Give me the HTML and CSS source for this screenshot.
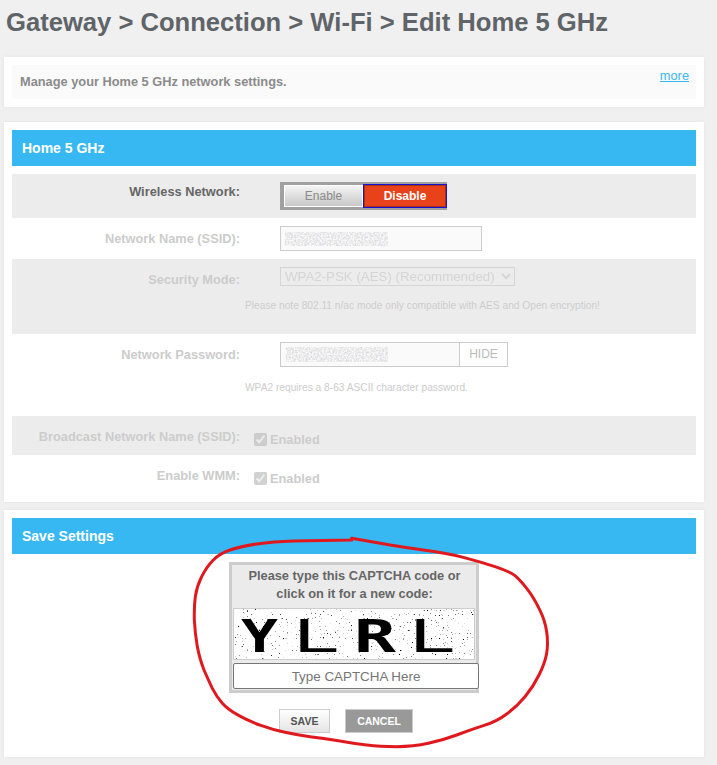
FILE: index.html
```html
<!DOCTYPE html>
<html lang="en">
<head>
  <meta charset="UTF-8" />
  <title>Edit Home 5 GHz</title>
  <link rel="stylesheet" href="styles.css">
</head>
<body>

  <svg class="defs" width="0" height="0">
    <filter id="specks" x="0" y="0" width="100%" height="100%">
      <feTurbulence type="fractalNoise" baseFrequency="0.75" numOctaves="1" seed="7" />
      <feColorMatrix type="matrix" values="0 0 0 0 0  0 0 0 0 0  0 0 0 0 0  9 0 0 0 -6" />
    </filter>
    <filter id="blurred" x="0" y="0" width="100%" height="100%">
      <feTurbulence type="fractalNoise" baseFrequency="0.6" numOctaves="2" seed="3" />
      <feColorMatrix type="matrix" values="0 0 0 0 .72  0 0 0 0 .72  0 0 0 0 .74  2.4 0 0 0 -0.75" />
    </filter>
  </svg>

  <h1>Gateway &gt; Connection &gt; Wi-Fi &gt; Edit Home 5 GHz</h1>

  <div class="panel intro-panel">
    <div class="intro">
      <p>Manage your Home 5 GHz network settings.</p>
      <a href="#">more</a>
    </div>
  </div>

  <div class="panel">
    <h2>Home 5 GHz</h2>

    <div class="row gray toggle-row">
      <div class="row-label active">Wireless Network:</div>
      <div class="row-value">
        <div class="toggle">
          <button class="toggle-on">Enable</button>
          <button class="toggle-off">Disable</button>
        </div>
      </div>
    </div>

    <div class="row ssid-row">
      <div class="row-label">Network Name (SSID):</div>
      <div class="row-value">
        <div class="field ssid-field">
          <svg class="smudge" width="103" height="14"><rect width="103" height="14" filter="url(#blurred)" /></svg>
        </div>
      </div>
    </div>

    <div class="row gray security-row">
      <div class="row-label">Security Mode:</div>
      <div class="row-value">
        <select class="mode" disabled>
          <option>WPA2-PSK (AES) (Recommended)</option>
        </select>
        <p class="note note-mode">Please note 802.11 n/ac mode only compatible with AES and Open encryption!</p>
      </div>
    </div>

    <div class="row password-row">
      <div class="row-label">Network Password:</div>
      <div class="row-value">
        <div class="field password-field">
          <div class="password-text">
            <svg class="smudge" width="102" height="15"><rect width="102" height="15" filter="url(#blurred)" /></svg>
          </div>
          <span class="hide">HIDE</span>
        </div>
        <p class="note note-password">WPA2 requires a 8-63 ASCII character password.</p>
      </div>
    </div>

    <div class="row gray check-row">
      <div class="row-label">Broadcast Network Name (SSID):</div>
      <label class="check"><input type="checkbox" checked disabled />Enabled</label>
    </div>

    <div class="row check-row">
      <div class="row-label">Enable WMM:</div>
      <label class="check"><input type="checkbox" checked disabled />Enabled</label>
    </div>
  </div>

  <div class="panel save-panel">
    <h2>Save Settings</h2>

    <div class="captcha">
      <p>Please type this CAPTCHA code or<br />click on it for a new code:</p>
      <svg class="captcha-img" width="242" height="52">
        <rect width="240" height="50" filter="url(#specks)" />
        <text class="captcha-code heavy" x="7" y="43" textLength="37" lengthAdjust="spacingAndGlyphs">Y</text>
        <text class="captcha-code" x="58" y="43" textLength="48" lengthAdjust="spacingAndGlyphs">L</text>
        <text class="captcha-code heavy" x="120" y="43" textLength="42" lengthAdjust="spacingAndGlyphs">R</text>
        <text class="captcha-code" x="174" y="43" textLength="48" lengthAdjust="spacingAndGlyphs">L</text>
      </svg>
      <input type="text" placeholder="Type CAPTCHA Here" />
    </div>

    <div class="actions">
      <button class="save">SAVE</button>
      <button class="cancel">CANCEL</button>
    </div>
  </div>

  <!-- red marker drawn over the screenshot -->
  <svg class="marker" width="380" height="235" viewBox="0 0 1140 705">
    <path d="M515 30Q400 32 340 33Q280 35 230 42Q180 50 150 60Q120 70 100 90Q80 110 65 140Q50 170 46 200Q42 230 43 270Q45 310 52 350Q60 390 72 420Q85 450 97 475Q110 500 127 520Q145 540 177 557Q210 575 245 587Q280 600 315 607Q350 615 390 620Q430 625 475 632Q520 640 560 645Q600 650 650 650Q700 650 745 640Q790 630 830 615Q870 600 910 587Q950 575 980 552Q1010 530 1035 500Q1060 470 1077 435Q1095 400 1100 370Q1105 340 1100 305Q1095 270 1077 235Q1060 200 1040 175Q1020 150 1005 137Q990 125 945 110Q900 95 850 82Q800 70 735 61Q670 52 635 46Q600 40 515 25L515 30" />
  </svg>

</body>
</html>
```

FILE: styles.css
```css
body {
  margin: 0;
  height: 765px;
  overflow: hidden;
  position: relative;
  font-family: "Liberation Sans", Arial, sans-serif;
  background-color: #f0f0f0;
  color: #666;
}

.defs {
  position: absolute;
}

h1 {
  margin: 0;
  padding: 7px 0 0 6px;
  height: 57px;
  box-sizing: border-box;
  font-size: 25.6px;
  line-height: 30px;
  font-weight: bold;
  color: #5f6468;
}

.panel {
  width: 684px;
  margin-left: 4px;
  padding: 8px;
  background-color: #fff;
  box-shadow: 0 0 4px rgba(0, 0, 0, 0.06);
}

.intro-panel {
  margin-bottom: 15px;
}

.save-panel {
  margin-top: 8px;
}

.intro {
  display: flex;
  justify-content: space-between;
  height: 34px;
  padding: 0 7px 0 8px;
  background-color: #fafafa;
}

.intro p {
  margin: 0;
  padding-top: 9px;
  font-size: 12.8px;
  line-height: 16px;
  font-weight: bold;
  color: #8a8a8a;
}

.intro a {
  padding-top: 4px;
  font-size: 12.8px;
  line-height: 14px;
  color: #38b8f2;
}

h2 {
  margin: 0;
  height: 36px;
  padding-left: 10px;
  background-color: #38b8f2;
  color: #fff;
  font-size: 14px;
  line-height: 36px;
  font-weight: bold;
}

.row {
  display: flex;
  box-sizing: border-box;
}

.gray {
  background-color: #ececec;
}

.row-label {
  width: 228px;
  flex-shrink: 0;
  padding-top: 13px;
  text-align: right;
  font-size: 12.8px;
  line-height: 15px;
  font-weight: bold;
  color: #ccc;
}

.row-label.active {
  color: #666;
}

.row-value {
  padding-left: 40px;
}

.toggle-row {
  height: 44px;
  margin-top: 8px;
}

.ssid-row {
  height: 41px;
  padding-top: 8px;
}

.ssid-row .row-label,
.password-row .row-label {
  padding-top: 5px;
}

.security-row {
  height: 75px;
  padding-top: 8px;
}

.security-row .row-label {
  padding-top: 5px;
}

.password-row {
  height: 82px;
  padding-top: 8px;
}

.check-row {
  height: 39px;
}

.toggle-row .row-label {
  padding-top: 10px;
}

.toggle-row .row-value {
  padding-top: 8px;
}

.toggle {
  display: flex;
  width: 167px;
  height: 28px;
  box-sizing: border-box;
  background-color: #a0a0a0;
  padding: 3px 0 3px 4px;
}

.toggle button {
  margin: 0;
  font-family: inherit;
  font-size: 12px;
}

.toggle-on {
  width: 79px;
  height: 22px;
  padding: 0;
  border: 1px solid #fff;
  background: linear-gradient(#f4f4f4, #c8c8c8);
  color: #8a8a8a;
}

.toggle-off {
  width: 84px;
  height: 24px;
  margin-top: -1px !important;
  padding: 0;
  border: 1px solid #8f2a10;
  outline: 1px solid #1414d8;
  outline-offset: -1px;
  box-shadow: inset 0 0 0 1px #a83010;
  background-color: #e8421a;
  color: #fff;
  font-weight: bold;
}

.field {
  box-sizing: border-box;
  height: 25px;
  border: 1px solid #ccc;
  background-color: #fafafa;
}

.ssid-field {
  width: 202px;
  padding: 5px 0 0 4px;
}

.smudge {
  display: block;
}

.mode {
  display: block;
  width: 235px;
  height: 19px;
  padding: 0;
  font-family: inherit;
  font-size: 13.3px;
  color: #ccc;
  background-color: #ececec;
  border: 1px solid #ccc;
  border-radius: 0;
}

.note {
  margin: 0 0 0 -35px;
  font-size: 10.2px;
  line-height: 12px;
  color: #ccc;
  white-space: nowrap;
}

.note-mode {
  margin-top: 14px;
}

.note-password {
  margin-top: 15px;
}

.password-field {
  display: flex;
  width: 228px;
}

.password-text {
  width: 179px;
  padding: 4px 0 0 5px;
  box-sizing: border-box;
  border-right: 1px solid #ccc;
}

.hide {
  flex: 1;
  text-align: center;
  font-size: 12px;
  line-height: 23px;
  color: #bbb;
  background-color: #fff;
}

.check {
  display: flex;
  align-items: center;
  height: 14px;
  margin: 16px 0 0 14px;
  font-size: 12.8px;
  font-weight: bold;
  color: #ccc;
}

.check input {
  width: 13px;
  height: 13px;
  margin: 0 3px 0 0;
}

.captcha {
  width: 250px;
  height: 131px;
  box-sizing: border-box;
  margin: 8px 0 0 217px;
  padding-left: 1px;
  border: 3px solid #ccc;
  background-color: #ebebeb;
}

.captcha p {
  margin: 0;
  padding-top: 2px;
  height: 43px;
  box-sizing: border-box;
  text-align: center;
  font-size: 12.8px;
  line-height: 17.5px;
  font-weight: bold;
  color: #666;
}

.captcha-img {
  display: block;
  box-sizing: border-box;
  border: 1px solid #ccc;
  background-color: #fff;
  overflow: visible;
}

.captcha-code {
  font-family: "DejaVu Sans Mono", monospace;
  font-size: 44px;
  fill: #000;
}

.captcha-code.heavy {
  font-weight: bold;
}

.captcha input {
  display: block;
  width: 246px;
  height: 26px;
  box-sizing: border-box;
  margin-top: 3px;
  padding: 0;
  border: 1px solid #767676;
  border-radius: 2px;
  background-color: #fff;
  text-align: center;
  font-family: inherit;
  font-size: 13.4px;
}

.actions {
  display: flex;
  gap: 15px;
  margin: 16px 0 16px 267px;
}

.actions button {
  height: 24px;
  padding: 0;
  font-family: inherit;
  font-size: 10.5px;
  font-weight: bold;
}

.save {
  width: 51px;
  border: 1px solid #ccc;
  background: linear-gradient(#fff, #e4e4e4);
  color: #555;
}

.cancel {
  width: 68px;
  border: 1px solid #ccc;
  background-color: #999;
  color: #fff;
}

.marker {
  position: absolute;
  left: 180px;
  top: 530px;
  fill: none;
}

.marker path {
  fill: none;
  stroke: #e0191f;
  stroke-width: 9;
  stroke-linecap: round;
  stroke-linejoin: round;
}
```
